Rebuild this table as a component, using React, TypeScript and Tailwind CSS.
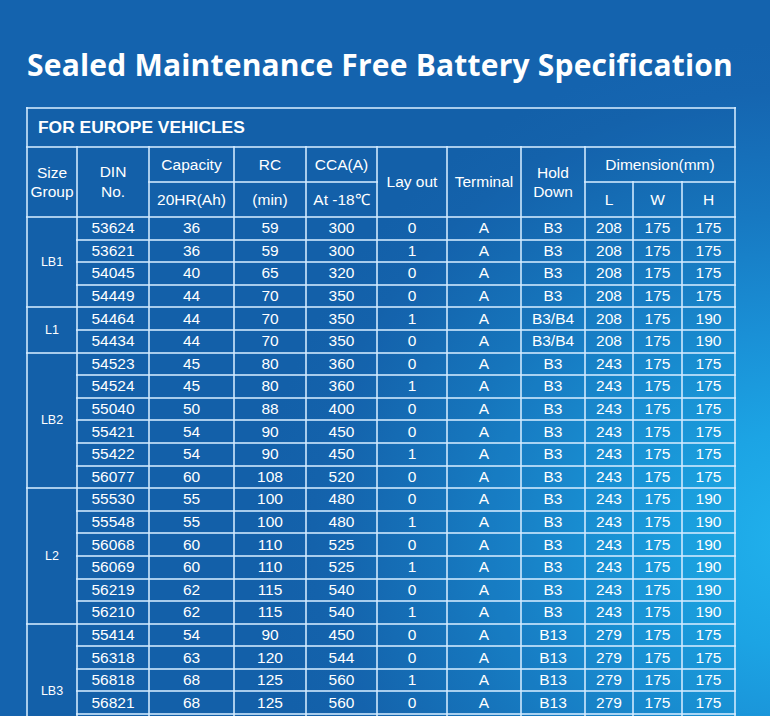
import React from "react";

type Row = [string, string, string, string, string, string, string, string, string, string];

const groups: { name: string; rows: Row[] }[] = [
  {
    name: "LB1",
    rows: [
      ["53624", "36", "59", "300", "0", "A", "B3", "208", "175", "175"],
      ["53621", "36", "59", "300", "1", "A", "B3", "208", "175", "175"],
      ["54045", "40", "65", "320", "0", "A", "B3", "208", "175", "175"],
      ["54449", "44", "70", "350", "0", "A", "B3", "208", "175", "175"],
    ],
  },
  {
    name: "L1",
    rows: [
      ["54464", "44", "70", "350", "1", "A", "B3/B4", "208", "175", "190"],
      ["54434", "44", "70", "350", "0", "A", "B3/B4", "208", "175", "190"],
    ],
  },
  {
    name: "LB2",
    rows: [
      ["54523", "45", "80", "360", "0", "A", "B3", "243", "175", "175"],
      ["54524", "45", "80", "360", "1", "A", "B3", "243", "175", "175"],
      ["55040", "50", "88", "400", "0", "A", "B3", "243", "175", "175"],
      ["55421", "54", "90", "450", "0", "A", "B3", "243", "175", "175"],
      ["55422", "54", "90", "450", "1", "A", "B3", "243", "175", "175"],
      ["56077", "60", "108", "520", "0", "A", "B3", "243", "175", "175"],
    ],
  },
  {
    name: "L2",
    rows: [
      ["55530", "55", "100", "480", "0", "A", "B3", "243", "175", "190"],
      ["55548", "55", "100", "480", "1", "A", "B3", "243", "175", "190"],
      ["56068", "60", "110", "525", "0", "A", "B3", "243", "175", "190"],
      ["56069", "60", "110", "525", "1", "A", "B3", "243", "175", "190"],
      ["56219", "62", "115", "540", "0", "A", "B3", "243", "175", "190"],
      ["56210", "62", "115", "540", "1", "A", "B3", "243", "175", "190"],
    ],
  },
  {
    name: "LB3",
    rows: [
      ["55414", "54", "90", "450", "0", "A", "B13", "279", "175", "175"],
      ["56318", "63", "120", "544", "0", "A", "B13", "279", "175", "175"],
      ["56818", "68", "125", "560", "1", "A", "B13", "279", "175", "175"],
      ["56821", "68", "125", "560", "0", "A", "B13", "279", "175", "175"],
      ["", "", "", "", "", "", "", "", "", ""],
      ["", "", "", "", "", "", "", "", "", ""],
    ],
  },
];

const cell = "border-2 border-[rgba(210,234,255,0.78)] text-center p-0 align-middle";

export default function App() {
  return (
    <div className="w-[770px] h-[716px] overflow-hidden bg-[#1463ae] bg-[radial-gradient(ellipse_540px_500px_at_800px_540px,#21b2ed_0%,#1ca4e4_22%,#1a90d6_42%,#1779c2_65%,#1565b0_90%,#1463ae_100%)]">
      <div className="w-[708px] ml-[26px] pt-[50px]">
        <h1
          className="text-center text-white font-bold text-[30px] leading-[30px] tracking-[0.2px] -ml-[4px] w-[716px]"
          style={{ fontFamily: '"Open Sans", sans-serif' }}
        >
          Sealed Maintenance Free Battery Specification
        </h1>
        <table
          className="mt-[27px] w-[708px] table-fixed border-collapse text-white bg-[rgba(0,20,60,0.04)]"
          style={{ fontFamily: '"Liberation Sans", Arial, sans-serif' }}
        >
          <colgroup>
            <col className="w-[50px]" />
            <col className="w-[72px]" />
            <col className="w-[85px]" />
            <col className="w-[72px]" />
            <col className="w-[71px]" />
            <col className="w-[70px]" />
            <col className="w-[74px]" />
            <col className="w-[64px]" />
            <col className="w-[48px]" />
            <col className="w-[49px]" />
            <col className="w-[53px]" />
          </colgroup>
          <tbody>
            <tr className="h-[39px]">
              <td colSpan={11} className={cell + " text-left pl-[10px] font-bold text-[17.4px]"}>
                FOR EUROPE VEHICLES
              </td>
            </tr>
            <tr className="h-[35px] text-[15.5px]">
              <td rowSpan={2} className={cell + " leading-[19px]"}>
                Size
                <br />
                Group
              </td>
              <td rowSpan={2} className={cell + " leading-[20px]"}>
                DIN
                <br />
                No.
              </td>
              <td className={cell}>Capacity</td>
              <td className={cell}>RC</td>
              <td className={cell}>CCA(A)</td>
              <td rowSpan={2} className={cell}>Lay out</td>
              <td rowSpan={2} className={cell}>Terminal</td>
              <td rowSpan={2} className={cell + " leading-[19px]"}>
                Hold
                <br />
                Down
              </td>
              <td colSpan={3} className={cell}>Dimension(mm)</td>
            </tr>
            <tr className="h-[35px] text-[15.5px]">
              <td className={cell}>20HR(Ah)</td>
              <td className={cell}>(min)</td>
              <td className={cell}>At -18℃</td>
              <td className={cell}>L</td>
              <td className={cell}>W</td>
              <td className={cell}>H</td>
            </tr>
            {groups.map((g) =>
              g.rows.map((r, i) => (
                <tr key={g.name + i} className="h-[22.6px] text-[15.5px] leading-[18px]">
                  {i === 0 && (
                    <td rowSpan={g.rows.length} className={cell + " text-[12.5px]"}>
                      {g.name}
                    </td>
                  )}
                  {r.map((v, j) => (
                    <td key={j} className={cell}>
                      {v}
                    </td>
                  ))}
                </tr>
              ))
            )}
          </tbody>
        </table>
      </div>
    </div>
  );
}
